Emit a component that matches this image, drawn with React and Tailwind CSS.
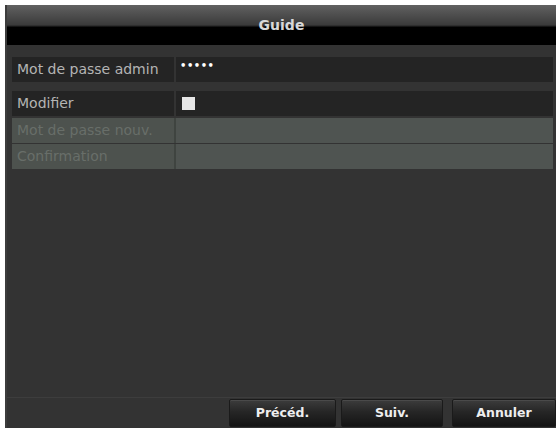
import React from "react";

const font = { fontFamily: '"DejaVu Sans", Verdana, sans-serif' };

function Row({ label, disabled, children, className = "" }) {
  return (
    <div className={`flex h-[25px] ${className}`}>
      <div
        className={`w-[162px] flex items-center pl-[5px] text-[14px] whitespace-nowrap overflow-hidden ${
          disabled ? "bg-[#4d524e] text-[#686e69]" : "bg-[#242424] text-[#b4b4b4]"
        }`}
      >
        {label}
      </div>
      <div className={`w-[2px] ${disabled ? "bg-[#3f4440]" : "bg-[#333333]"}`} />
      <div
        className={`flex-1 flex items-center ${
          disabled ? "bg-[#4f5451]" : "bg-[#242424]"
        }`}
      >
        {children}
      </div>
    </div>
  );
}

function Btn({ children, w }) {
  return (
    <div
      className={`${w} h-[28px] flex items-center justify-center rounded-[2px] border border-[#1a1a1a] bg-[linear-gradient(to_bottom,#3c3c3c_0%,#262626_45%,#141414_100%)] text-[#eeeeee] font-bold text-[12.5px] shadow-[inset_0_1px_0_#4a4a4a]`}
    >
      {children}
    </div>
  );
}

export default function App() {
  return (
    <div className="w-[559px] h-[428px] bg-white pl-[5px] pt-[5px] overflow-hidden" style={font}>
      <div className="w-[551px] h-[423px] bg-[#333333] flex flex-col rounded-tr-[4px] border-l-[2px] border-[#3c3c3c]">
        <div className="h-[40px] flex items-center justify-center pt-[1px] text-[14px] font-semibold text-[#d8d8d8] bg-[linear-gradient(to_bottom,#616161_0%,#4a4a4a_30%,#3a3a3a_50%,#000000_56%,#000000_100%)]">
          Guide
        </div>
        <div className="pt-[12px] pl-[5px] pr-[3px] flex flex-col">
          <Row label="Mot de passe admin">
            <span className="pl-[4px] text-[10px] font-bold text-white tracking-[0.5px] leading-none -mt-[8px]">
              •••••
            </span>
          </Row>
          <Row label="Modifier" className="mt-[9px]">
            <div className="ml-[6px] w-[13px] h-[13px] bg-[#e6e6e6]" />
          </Row>
          <Row label="Mot de passe nouv." disabled className="mt-[2px]" />
          <Row label="Confirmation" disabled className="mt-[1px]" />
        </div>
        <div className="flex-1" />
        <div className="border-t border-[#3d3d3d] pt-[1px] pb-[1px] flex justify-end">
          <Btn w="w-[107px]">Précéd.</Btn>
          <div className="w-[5px]" />
          <Btn w="w-[102px]">Suiv.</Btn>
          <div className="w-[9px]" />
          <Btn w="w-[104px]">Annuler</Btn>
        </div>
      </div>
    </div>
  );
}
